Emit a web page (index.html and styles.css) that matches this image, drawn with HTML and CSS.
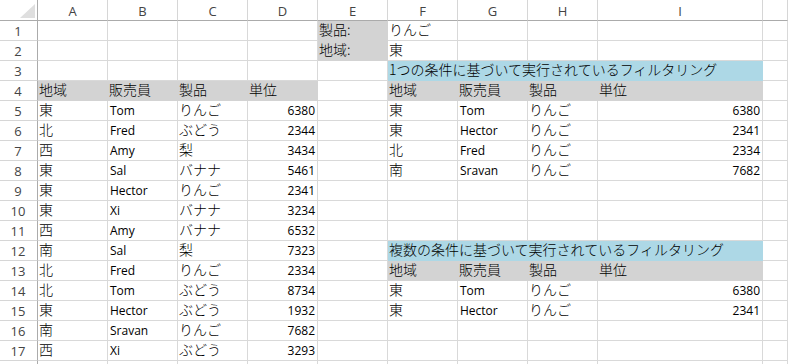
FILE: index.html
```html
<!DOCTYPE html>
<html lang="ja">
<head>
<meta charset="utf-8">
<title>Sheet</title>
<link rel="stylesheet" href="styles.css">
</head>
<body>
<div class="sheet">
  <div class="corner"><span class="tri"></span></div>
  <div class="h">A</div><div class="h">B</div><div class="h">C</div><div class="h">D</div><div class="h">E</div><div class="h">F</div><div class="h">G</div><div class="h">H</div><div class="h">I</div><div class="h"></div>

  <div class="r">1</div>
  <div class="c"></div><div class="c"></div><div class="c"></div><div class="c"></div>
  <div class="c j g">製品:</div><div class="c j">りんご</div><div class="c"></div><div class="c"></div><div class="c"></div><div class="c"></div>

  <div class="r">2</div>
  <div class="c"></div><div class="c"></div><div class="c"></div><div class="c"></div>
  <div class="c j g">地域:</div><div class="c j">東</div><div class="c"></div><div class="c"></div><div class="c"></div><div class="c"></div>

  <div class="r">3</div>
  <div class="c"></div><div class="c"></div><div class="c"></div><div class="c"></div><div class="c"></div>
  <div class="c j b">1つの条件に基づいて実行されているフィルタリング</div><div class="c"></div>

  <div class="r">4</div>
  <div class="c j g">地域</div><div class="c j g">販売員</div><div class="c j g">製品</div><div class="c j g">単位</div>
  <div class="c"></div>
  <div class="c j g">地域</div><div class="c j g">販売員</div><div class="c j g">製品</div><div class="c j g">単位</div><div class="c"></div>

  <div class="r">5</div>
  <div class="c j">東</div><div class="c">Tom</div><div class="c j">りんご</div><div class="c n">6380</div>
  <div class="c"></div>
  <div class="c j">東</div><div class="c">Tom</div><div class="c j">りんご</div><div class="c n">6380</div><div class="c"></div>

  <div class="r">6</div>
  <div class="c j">北</div><div class="c">Fred</div><div class="c j">ぶどう</div><div class="c n">2344</div>
  <div class="c"></div>
  <div class="c j">東</div><div class="c">Hector</div><div class="c j">りんご</div><div class="c n">2341</div><div class="c"></div>

  <div class="r">7</div>
  <div class="c j">西</div><div class="c">Amy</div><div class="c j">梨</div><div class="c n">3434</div>
  <div class="c"></div>
  <div class="c j">北</div><div class="c">Fred</div><div class="c j">りんご</div><div class="c n">2334</div><div class="c"></div>

  <div class="r">8</div>
  <div class="c j">東</div><div class="c">Sal</div><div class="c j">バナナ</div><div class="c n">5461</div>
  <div class="c"></div>
  <div class="c j">南</div><div class="c">Sravan</div><div class="c j">りんご</div><div class="c n">7682</div><div class="c"></div>

  <div class="r">9</div>
  <div class="c j">東</div><div class="c">Hector</div><div class="c j">りんご</div><div class="c n">2341</div>
  <div class="c"></div><div class="c"></div><div class="c"></div><div class="c"></div><div class="c"></div><div class="c"></div>

  <div class="r">10</div>
  <div class="c j">東</div><div class="c">Xi</div><div class="c j">バナナ</div><div class="c n">3234</div>
  <div class="c"></div><div class="c"></div><div class="c"></div><div class="c"></div><div class="c"></div><div class="c"></div>

  <div class="r">11</div>
  <div class="c j">西</div><div class="c">Amy</div><div class="c j">バナナ</div><div class="c n">6532</div>
  <div class="c"></div><div class="c"></div><div class="c"></div><div class="c"></div><div class="c"></div><div class="c"></div>

  <div class="r">12</div>
  <div class="c j">南</div><div class="c">Sal</div><div class="c j">梨</div><div class="c n">7323</div>
  <div class="c"></div>
  <div class="c j b">複数の条件に基づいて実行されているフィルタリング</div><div class="c"></div>

  <div class="r">13</div>
  <div class="c j">北</div><div class="c">Fred</div><div class="c j">りんご</div><div class="c n">2334</div>
  <div class="c"></div>
  <div class="c j g">地域</div><div class="c j g">販売員</div><div class="c j g">製品</div><div class="c j g">単位</div><div class="c"></div>

  <div class="r">14</div>
  <div class="c j">北</div><div class="c">Tom</div><div class="c j">ぶどう</div><div class="c n">8734</div>
  <div class="c"></div>
  <div class="c j">東</div><div class="c">Tom</div><div class="c j">りんご</div><div class="c n">6380</div><div class="c"></div>

  <div class="r">15</div>
  <div class="c j">東</div><div class="c">Hector</div><div class="c j">ぶどう</div><div class="c n">1932</div>
  <div class="c"></div>
  <div class="c j">東</div><div class="c">Hector</div><div class="c j">りんご</div><div class="c n">2341</div><div class="c"></div>

  <div class="r">16</div>
  <div class="c j">南</div><div class="c">Sravan</div><div class="c j">りんご</div><div class="c n">7682</div>
  <div class="c"></div><div class="c"></div><div class="c"></div><div class="c"></div><div class="c"></div><div class="c"></div>

  <div class="r">17</div>
  <div class="c j">西</div><div class="c">Xi</div><div class="c j">ぶどう</div><div class="c n">3293</div>
  <div class="c"></div><div class="c"></div><div class="c"></div><div class="c"></div><div class="c"></div><div class="c"></div>

  <div class="r"></div>
  <div class="c"></div><div class="c"></div><div class="c"></div><div class="c"></div><div class="c"></div><div class="c"></div><div class="c"></div><div class="c"></div><div class="c"></div><div class="c"></div>
</div>
</body>
</html>
```

FILE: styles.css
```css
html, body {
  margin: 0;
  padding: 0;
  background: #ffffff;
  overflow: hidden;
}

.sheet {
  display: grid;
  grid-template-columns: 38px repeat(8, 70px) 165px 1fr;
  grid-template-rows: 21px repeat(17, 20px) 20px;
  width: 788px;
  height: 364px;
  overflow: hidden;
  font-family: "Open Sans", "Noto Sans CJK JP", sans-serif;
  font-size: 12px;
  color: #000;
}

.sheet > div {
  box-sizing: border-box;
  min-width: 0;
}

.corner {
  border-right: 1px solid #ababab;
  border-bottom: 1px solid #ababab;
  display: flex;
  justify-content: flex-end;
  align-items: flex-end;
  padding: 0 2px 2px 0;
}

.tri {
  width: 0;
  height: 0;
  border-left: 15px solid transparent;
  border-bottom: 14px solid #dfdfdf;
}

.h {
  border-right: 1px solid #d6d6d6;
  border-bottom: 1px solid #ababab;
  color: #444;
  font-size: 13px;
  line-height: 16px;
  text-align: center;
  display: flex;
  align-items: flex-end;
  justify-content: center;
  padding-bottom: 1px;
}

.r {
  border-right: 1px solid #ababab;
  border-bottom: 1px solid #d6d6d6;
  color: #444;
  font-size: 13px;
  line-height: 16px;
  display: flex;
  align-items: flex-end;
  justify-content: center;
  padding: 0 1px 1px 0;
}

.c {
  border-right: 1px solid #d9d9d9;
  border-bottom: 1px solid #d9d9d9;
  display: flex;
  align-items: flex-end;
  padding: 0 2px 1px 2px;
  line-height: 16px;
  white-space: nowrap;
  overflow: visible;
}

.j {
  font-family: "Noto Sans CJK JP", sans-serif;
  font-size: 14px;
  font-weight: 300;
  line-height: 17px;
  padding-bottom: 2px;
  padding-left: 1px;
}

.n {
  justify-content: flex-end;
}

.g {
  background: #d3d3d3;
  border-color: #d3d3d3;
}

.b {
  grid-column: span 4;
  background: #add8e6;
  border-color: #add8e6;
}
```
